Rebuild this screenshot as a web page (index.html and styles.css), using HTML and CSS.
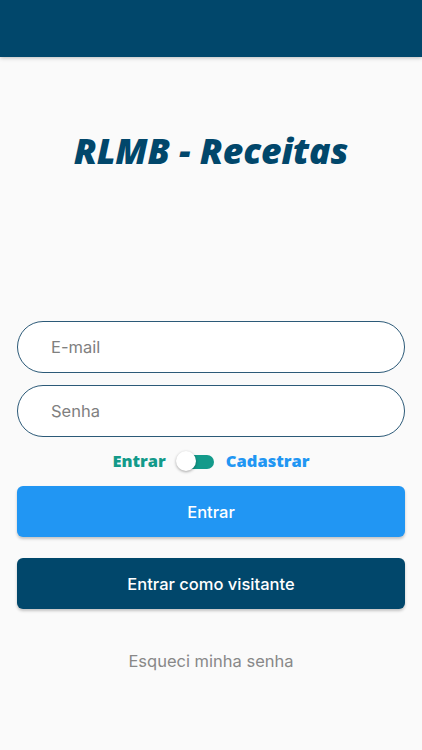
FILE: index.html
```html
<!DOCTYPE html>
<html lang="pt">
<head>
<meta charset="utf-8">
<title>RLMB - Receitas</title>
<link rel="stylesheet" href="styles.css">
</head>
<body>
<header class="appbar"></header>
<main class="content">
  <h1 class="title">RLMB - Receitas</h1>
  <form class="form">
    <div class="field"><input type="text" placeholder="E-mail"></div>
    <div class="field"><input type="password" placeholder="Senha"></div>
    <div class="switch-row">
      <span class="lbl-left">Entrar</span>
      <span class="switch"><span class="track"></span><span class="thumb"></span></span>
      <span class="lbl-right">Cadastrar</span>
    </div>
    <button type="button" class="btn btn-primary">Entrar</button>
    <button type="button" class="btn btn-dark">Entrar como visitante</button>
    <div class="forgot">Esqueci minha senha</div>
  </form>
</main>
</body>
</html>
```
FILE: styles.css
```css
* { box-sizing: border-box; }
html, body { margin: 0; padding: 0; }
body {
  background: #fafafa;
  font-family: Inter, Roboto, "Noto Sans", Arial, sans-serif;
  width: 422px;
  height: 750px;
  overflow: hidden;
}
.appbar {
  height: 57px;
  background: #01476b;
  box-shadow: 0 1px 4px rgba(0,0,0,0.25);
  position: relative;
  z-index: 1;
}
.content {
  padding: 0 17px;
}
.title {
  margin: 71px 0 0;
  height: 44px;
  text-align: center;
  font-family: "Open Sans", Lato, sans-serif;
  font-weight: 800;
  font-style: italic;
  font-size: 35.5px;
  line-height: 44px;
  color: #01476b;
  letter-spacing: -0.1px;
}
.form {
  margin-top: 149px;
  display: flex;
  flex-direction: column;
}
.field {
  height: 52px;
  border: 1.5px solid #2c5a78;
  border-radius: 26px;
  background: #fff;
  margin-bottom: 12px;
  display: flex;
  align-items: center;
  padding-left: 31px;
}
.field input {
  border: none;
  outline: none;
  background: transparent;
  font-family: Inter, Roboto, sans-serif;
  font-size: 16.5px;
  color: #333;
  width: 100%;
}
.field input::placeholder { color: #808080; }
.switch-row {
  display: flex;
  justify-content: center;
  align-items: center;
  height: 24px;
  font-family: "Open Sans", Lato, sans-serif;
  font-weight: 800;
  font-size: 16.5px;
  line-height: 22px;
}
.lbl-left { color: #139a8a; }
.lbl-right { color: #2196f3; }
.switch {
  position: relative;
  width: 38px;
  height: 22px;
  margin: 0 12px 0 10px;
  display: inline-block;
}
.track {
  position: absolute;
  left: 4px;
  right: 0;
  top: 5px;
  height: 14px;
  border-radius: 7px;
  background: #139a8a;
}
.thumb {
  position: absolute;
  left: 0;
  top: 1px;
  width: 20px;
  height: 20px;
  border-radius: 50%;
  background: #fff;
  box-shadow: 0 1px 3px rgba(0,0,0,0.35);
}
.btn {
  height: 51px;
  border: none;
  border-radius: 6px;
  color: #fff;
  font-family: Inter, Roboto, sans-serif;
  font-size: 16.5px;
  font-weight: 500;
  box-shadow: 0 2px 3px rgba(0,0,0,0.22);
}
.btn-primary {
  background: #2196f3;
  margin-top: 13px;
}
.btn-dark {
  background: #01476b;
  margin-top: 21px;
}
.forgot {
  text-align: center;
  color: #888;
  font-size: 16.5px;
  margin-top: 42px;
}
```
